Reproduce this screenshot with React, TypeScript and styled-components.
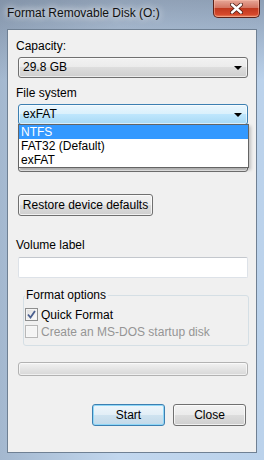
import styled, { createGlobalStyle } from "styled-components";

const GlobalStyle = createGlobalStyle`
  html, body {
    margin: 0;
    padding: 0;
  }
  body {
    font-family: "Segoe UI", "Liberation Sans", Arial, sans-serif;
    font-size: 12px;
    color: #000;
  }
`;

const Window = styled.div`
  width: 264px;
  height: 460px;
  box-sizing: border-box;
  display: flex;
  flex-direction: column;
  background:
    linear-gradient(to bottom, rgba(105, 118, 138, 0.55) 0, rgba(105, 118, 138, 0) 80px),
    linear-gradient(to right, #a4b8cf 0, #c2d7ee 45%, #bbd2eb 100%);
`;

const TitleBar = styled.div`
  height: 29px;
  display: flex;
  align-items: flex-start;
  padding: 0 4px 0 7px;
`;

const Title = styled.span`
  margin-top: 6px;
  line-height: 15px;
  color: #111;
  text-shadow: 0 0 6px rgba(255, 255, 255, 0.9), 0 0 10px rgba(255, 255, 255, 0.7);
`;

const CloseButton = styled.div`
  margin-left: auto;
  width: 47px;
  height: 18px;
  box-sizing: border-box;
  border: 1px solid #5b2219;
  border-top: none;
  border-radius: 0 0 5px 5px;
  background: linear-gradient(to bottom, #e6a798 0, #d47562 45%, #c0391f 50%, #d5482b 85%, #e98a64 100%);
  box-shadow: inset 0 0 0 1px rgba(255, 200, 180, 0.45);
  display: flex;
  align-items: center;
  justify-content: center;
`;

const Client = styled.div`
  flex: 1;
  margin: 0 7px 7px;
  border: 1px solid #6f8093;
  background: #f0f0f0;
  padding: 9px 8px 0 10px;
  display: flex;
  flex-direction: column;
`;

const FieldLabel = styled.div<{ $gap?: number }>`
  line-height: 15px;
  height: 15px;
  margin: ${(p) => p.$gap ?? 0}px 0 3px -2px;
`;

const ComboWrap = styled.div`
  position: relative;
`;

const Combo = styled.div<{ $focused?: boolean }>`
  height: 21px;
  box-sizing: border-box;
  border: 1px solid ${(p) => (p.$focused ? "#3c7fb1" : "#707070")};
  border-radius: 3px;
  background: ${(p) =>
    p.$focused
      ? "linear-gradient(to bottom, #eaf6fd 0, #d9f0fc 50%, #bee6fd 50%, #a7d9f5 100%)"
      : "linear-gradient(to bottom, #f2f2f2 0, #ebebeb 50%, #dddddd 50%, #cfcfcf 100%)"};
  box-shadow: inset 0 0 0 1px rgba(255, 255, 255, 0.6);
  display: flex;
  align-items: center;
  padding: 0 5px 0 4px;
  line-height: 15px;
`;

const ComboText = styled.span`
  flex: 1;
`;

const Arrow = styled.span`
  margin-left: auto;
  width: 0;
  height: 0;
  border-left: 4px solid transparent;
  border-right: 4px solid transparent;
  border-top: 4px solid #000;
`;

const DropList = styled.div`
  position: absolute;
  top: calc(100% - 1px);
  left: 0;
  width: calc(100% + 1px);
  box-sizing: border-box;
  background: #fff;
  border: 1px solid #646464;
  box-shadow: 2px 2px 3px rgba(0, 0, 0, 0.2);
  z-index: 2;
`;

const DropItem = styled.div<{ $selected?: boolean }>`
  height: 14px;
  line-height: 14px;
  padding-left: 2px;
  background: ${(p) => (p.$selected ? "#3399ff" : "transparent")};
  color: ${(p) => (p.$selected ? "#fff" : "#000")};
`;

const PushButton = styled.div<{ $default?: boolean; $width: number }>`
  width: ${(p) => p.$width}px;
  height: 22px;
  box-sizing: border-box;
  border: 1px solid ${(p) => (p.$default ? "#3c7fb1" : "#707070")};
  border-radius: 3px;
  background: ${(p) =>
    p.$default
      ? "linear-gradient(to bottom, #eef6fb 0, #e2eef6 50%, #cfe3f0 50%, #c2d9e9 100%)"
      : "linear-gradient(to bottom, #f2f2f2 0, #ebebeb 50%, #dddddd 50%, #cfcfcf 100%)"};
  box-shadow: ${(p) =>
    p.$default ? "inset 0 0 0 1px #8fd7f7" : "inset 0 0 0 1px rgba(255, 255, 255, 0.7)"};
  display: flex;
  align-items: center;
  justify-content: center;
  line-height: 15px;
`;

const ButtonSlot = styled.div`
  margin-top: 22px;
`;

const TextInput = styled.div`
  height: 21px;
  margin-top: 1px;
  box-sizing: border-box;
  background: #fff;
  border: 1px solid #dde2e8;
  border-top-color: #c3c7cd;
  border-radius: 2px;
`;

const GroupBox = styled.fieldset`
  margin: 10px -1px 0 5px;
  padding: 3px 0 5px 1px;
  border: 1px solid #d5dfe5;
  border-radius: 3px;
  min-width: 0;
`;

const Legend = styled.legend`
  padding: 0 2px 0 1px;
  line-height: 15px;
`;

const CheckRow = styled.div<{ $disabled?: boolean }>`
  height: 17px;
  display: flex;
  align-items: center;
  gap: 3px;
  color: ${(p) => (p.$disabled ? "#959595" : "#000")};
`;

const CheckBox = styled.span<{ $disabled?: boolean }>`
  width: 13px;
  height: 13px;
  box-sizing: border-box;
  border: 1px solid ${(p) => (p.$disabled ? "#b8b8b8" : "#8e8f8f")};
  background: ${(p) =>
    p.$disabled ? "#f4f4f4" : "linear-gradient(135deg, #dcdcdc 0, #ffffff 100%)"};
  box-shadow: inset 0 0 0 1px ${(p) => (p.$disabled ? "#f7f7f7" : "#f4f4f4")};
  display: flex;
  align-items: center;
  justify-content: center;
`;

const Progress = styled.div`
  margin-top: 16px;
  height: 14px;
  box-sizing: border-box;
  border: 1px solid #b2b2b2;
  border-radius: 3px;
  background: linear-gradient(to bottom, #f2f2f2 0, #e4e4e4 50%, #d8d8d8 100%);
  box-shadow: inset 0 0 0 1px rgba(255, 255, 255, 0.6);
`;

const ButtonRow = styled.div`
  margin-top: 28px;
  display: flex;
  justify-content: flex-end;
  gap: 8px;
  padding-right: 2px;
`;

export default function App() {
  return (
    <>
      <GlobalStyle />
      <Window>
        <TitleBar>
          <Title>Format Removable Disk (O:)</Title>
          <CloseButton>
            <svg width="13" height="11" viewBox="0 0 13 11">
              <path d="M2 1.5 L11 9.5 M11 1.5 L2 9.5" stroke="#4a1a12" strokeWidth="4" strokeLinecap="round" />
              <path d="M2 1.5 L11 9.5 M11 1.5 L2 9.5" stroke="#fff" strokeWidth="2.4" strokeLinecap="round" />
            </svg>
          </CloseButton>
        </TitleBar>
        <Client>
          <FieldLabel>Capacity:</FieldLabel>
          <ComboWrap>
            <Combo>
              <ComboText>29.8 GB</ComboText>
              <Arrow />
            </Combo>
          </ComboWrap>

          <FieldLabel $gap={8}>File system</FieldLabel>
          <ComboWrap>
            <Combo $focused>
              <ComboText>exFAT</ComboText>
              <Arrow />
            </Combo>
            <DropList>
              <DropItem $selected>NTFS</DropItem>
              <DropItem>FAT32 (Default)</DropItem>
              <DropItem>exFAT</DropItem>
            </DropList>
          </ComboWrap>

          {/* allocation unit size row, covered by the open list */}
          <FieldLabel $gap={8} />
          <ComboWrap>
            <Combo>
              <Arrow />
            </Combo>
          </ComboWrap>

          <ButtonSlot>
            <PushButton $width={135}>Restore device defaults</PushButton>
          </ButtonSlot>

          <FieldLabel $gap={22}>Volume label</FieldLabel>
          <TextInput />

          <GroupBox>
            <Legend>Format options</Legend>
            <CheckRow>
              <CheckBox>
                <svg width="9" height="9" viewBox="0 0 9 9">
                  <path d="M1 4.5 L3.5 7.5 L8 1" stroke="#4a5f8f" strokeWidth="1.8" fill="none" />
                </svg>
              </CheckBox>
              Quick Format
            </CheckRow>
            <CheckRow $disabled>
              <CheckBox $disabled />
              Create an MS-DOS startup disk
            </CheckRow>
          </GroupBox>

          <Progress />

          <ButtonRow>
            <PushButton $default $width={73}>Start</PushButton>
            <PushButton $width={73}>Close</PushButton>
          </ButtonRow>
        </Client>
      </Window>
    </>
  );
}
